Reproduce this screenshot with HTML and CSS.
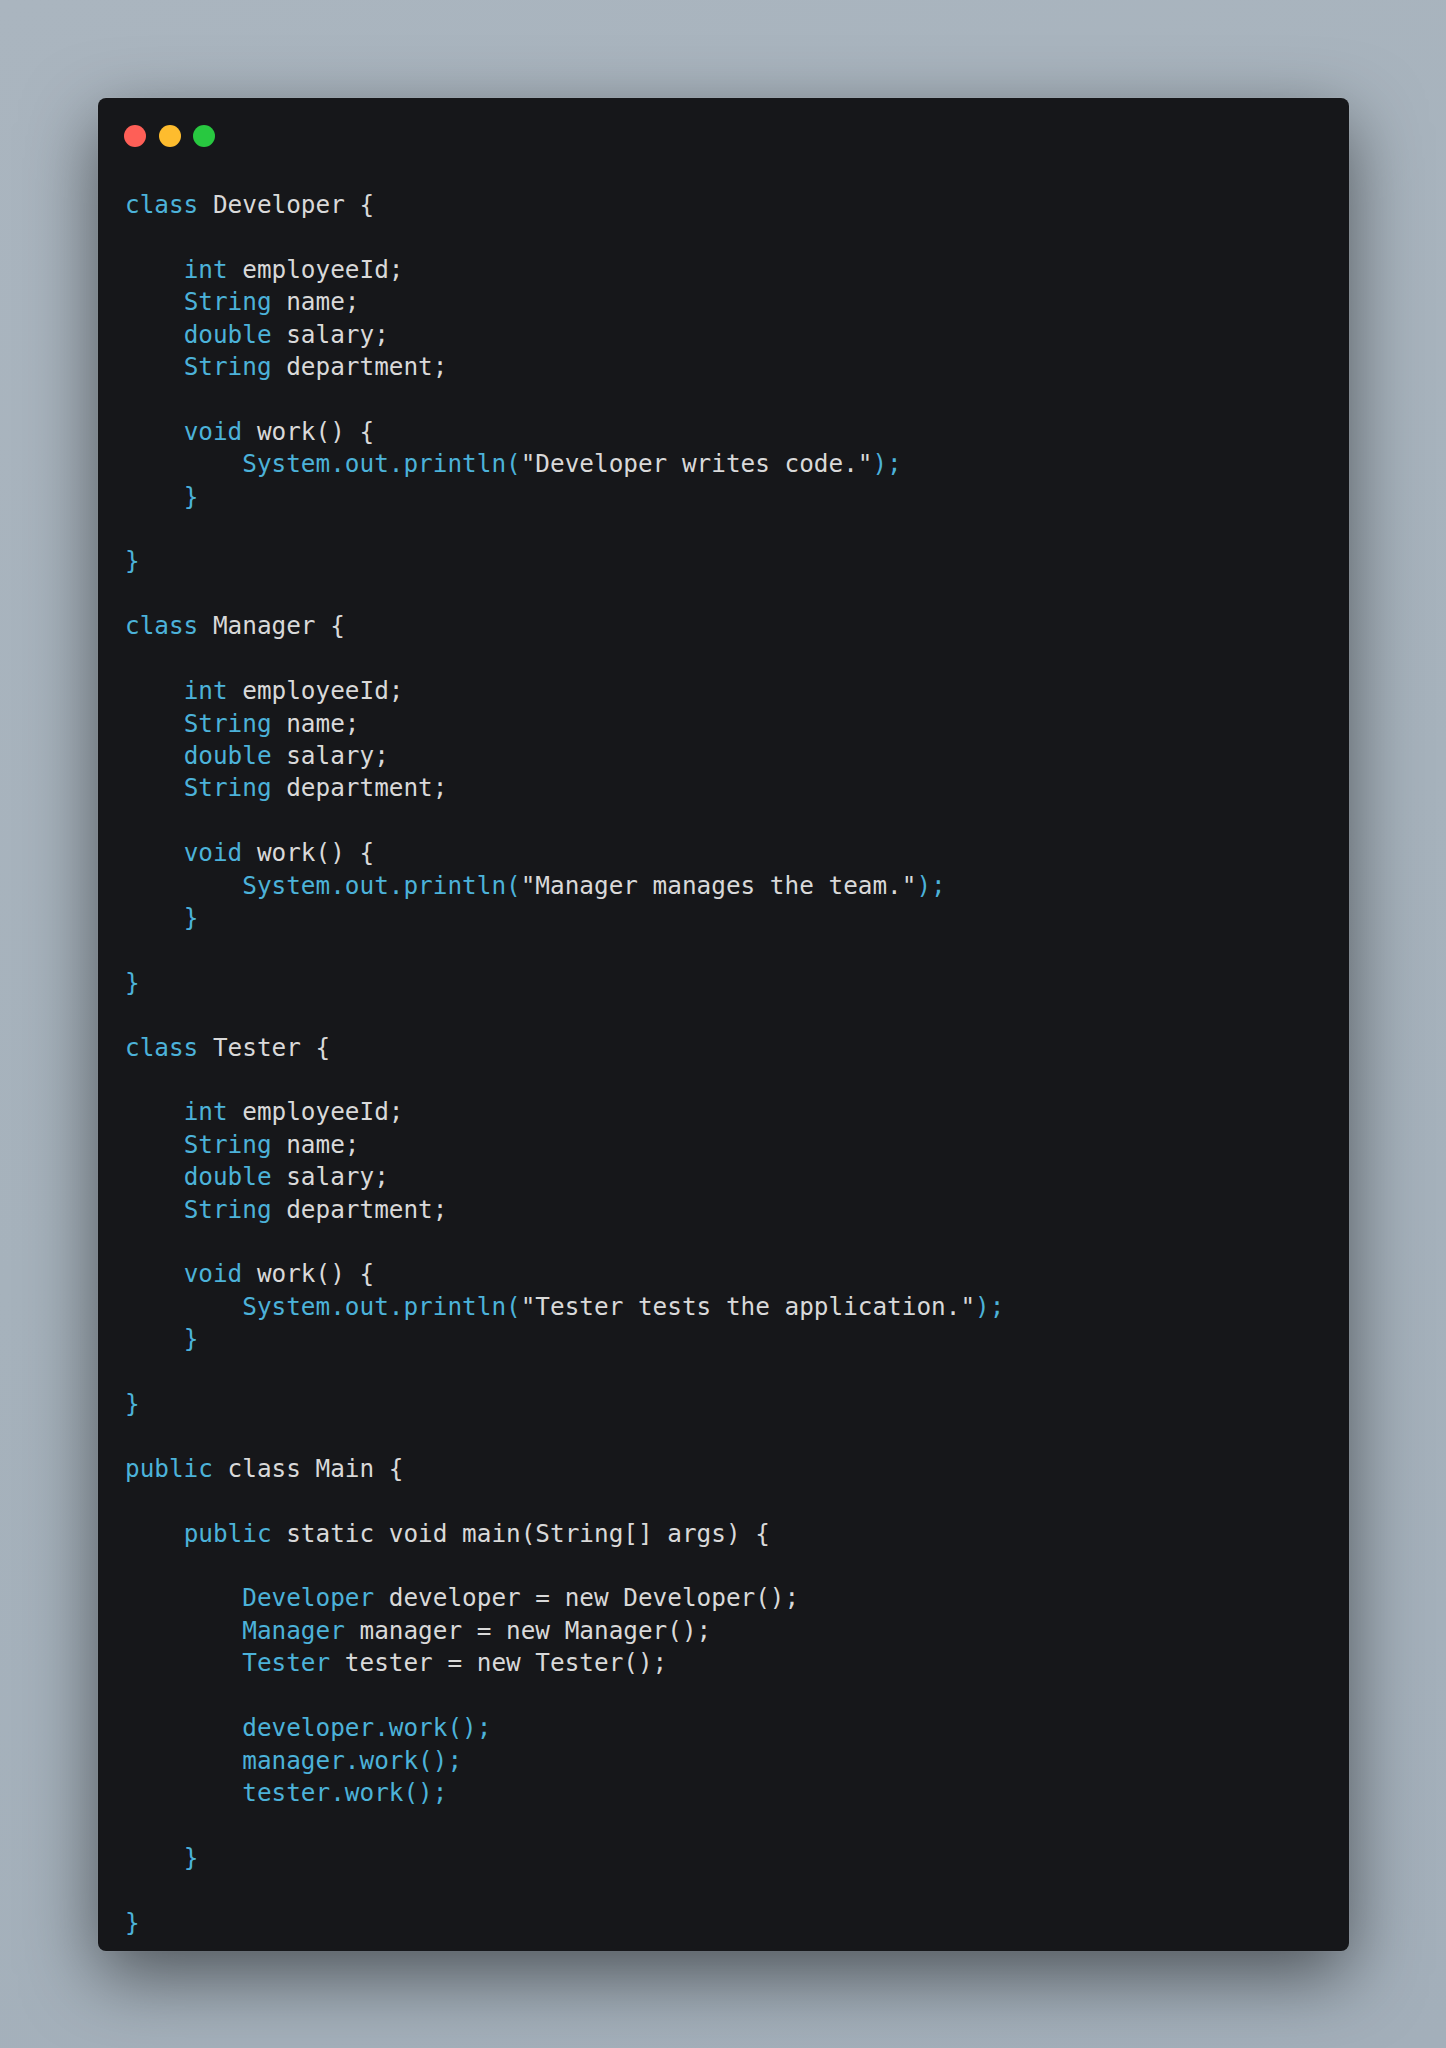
FILE: index.html
```html
<!DOCTYPE html>
<html>
<head>
<meta charset="utf-8">
<link rel="stylesheet" href="styles.css">
</head>
<body>
<div class="stage">
  <div class="window">
    <div class="dots">
      <span class="dot red"></span>
      <span class="dot yellow"></span>
      <span class="dot green"></span>
    </div>
<pre class="code"><span class="k">class</span> Developer {

    <span class="k">int</span> employeeId;
    <span class="k">String</span> name;
    <span class="k">double</span> salary;
    <span class="k">String</span> department;

    <span class="k">void</span> work() {
        <span class="k">System.out.println(</span>"Developer writes code."<span class="k">);</span>
    <span class="k">}</span>

<span class="k">}</span>

<span class="k">class</span> Manager {

    <span class="k">int</span> employeeId;
    <span class="k">String</span> name;
    <span class="k">double</span> salary;
    <span class="k">String</span> department;

    <span class="k">void</span> work() {
        <span class="k">System.out.println(</span>"Manager manages the team."<span class="k">);</span>
    <span class="k">}</span>

<span class="k">}</span>

<span class="k">class</span> Tester {

    <span class="k">int</span> employeeId;
    <span class="k">String</span> name;
    <span class="k">double</span> salary;
    <span class="k">String</span> department;

    <span class="k">void</span> work() {
        <span class="k">System.out.println(</span>"Tester tests the application."<span class="k">);</span>
    <span class="k">}</span>

<span class="k">}</span>

<span class="k">public</span> class Main {

    <span class="k">public</span> static void main(String[] args) {

        <span class="k">Developer</span> developer = new Developer();
        <span class="k">Manager</span> manager = new Manager();
        <span class="k">Tester</span> tester = new Tester();

        <span class="k">developer.work();</span>
        <span class="k">manager.work();</span>
        <span class="k">tester.work();</span>

    <span class="k">}</span>

<span class="k">}</span></pre>
  </div>
</div>
</body>
</html>
```

FILE: styles.css
```css
html, body {
  margin: 0;
  padding: 0;
}

body {
  background: linear-gradient(160deg, #aab5bf 0%, #a6b2bc 50%, #a3afba 100%);
  width: 1446px;
  height: 2048px;
  overflow: hidden;
}

.stage {
  padding: 98px 97px 97px 98px;
}

.window {
  background: #16171a;
  border-radius: 8px;
  height: 1853px;
  box-sizing: border-box;
  padding: 27px 26px 12px 26px;
  box-shadow: 0 24px 72px rgba(0, 0, 0, 0.52), 0 0 0 1px rgba(255, 255, 255, 0.06);
}

.dots {
  display: flex;
  gap: 12.5px;
  height: 22px;
}

.dot {
  width: 22px;
  height: 22px;
  border-radius: 50%;
  display: block;
}

.red { background: #fe5f57; }
.yellow { background: #febc2e; }
.green { background: #28c840; }

.code {
  margin: 42px 0 0 1px;
  font-family: "DejaVu Sans Mono", monospace;
  font-size: 24.35px;
  line-height: 32.4px;
  color: #d9d9d9;
  white-space: pre;
}

.k {
  color: #4cb2d9;
}
```
